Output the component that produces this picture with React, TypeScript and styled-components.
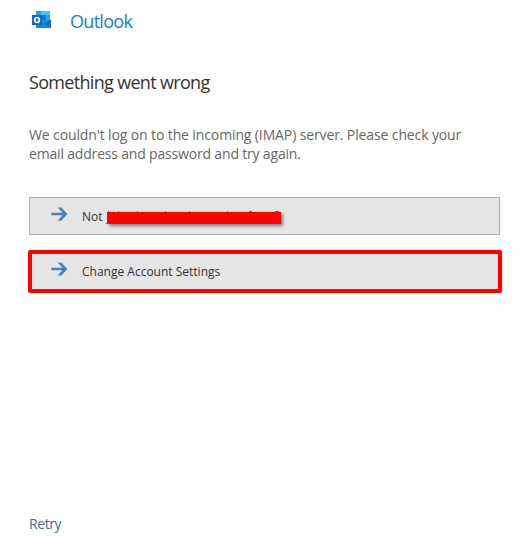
import React from 'react';
import styled, {createGlobalStyle} from 'styled-components';

const theme = {
    colors: {
        brand: '#1a7dcb',
        title: '#333333',
        text: '#666666',
        action: '#333333',
        actionBg: '#e5e5e5',
        actionBorder: '#adadad',
        arrow: '#4a80bd',
        link: '#3b6e9e',
        marker: '#ff0000',
    },
    font: '"Open Sans", "Noto Sans", sans-serif',
}

const OutlookLogo = () => (
    <Logo viewBox="0 0 20 18">
        <path d="M4 0h14v13H4z" fill="#1490df"/>
        <path d="M4 0h5v4H4z" fill="#28a0e5"/>
        <path d="M9 0h9v4H9z" fill="#45c4f5"/>
        <path d="M10 4h4v5h-4z" fill="#0f7fd6"/>
        <path d="M14 4h4v5h-4z" fill="#28a8ea"/>
        <path d="M4 9l8 4 7-4.500V17H4z" fill="#1f9be0"/>
        <path d="M4 9l15 8H4z" fill="#1a8ad6"/>
        <path d="M12 13l7-4.500V17z" fill="#1a6fb5"/>
        <path d="M0 4h10v10H0z" fill="#0a6cc4"/>
        <ellipse cx="5" cy="9" rx="2.400" ry="2.500" fill="none" stroke="#ffffff" strokeWidth="1.700"/>
    </Logo>
)

const ArrowIcon = () => (
    <Arrow viewBox="0 0 17 14">
        <path d="M0.3 5.8h11.2L6.6 0.4h3.8L16.4 7l-6 6.6H6.6l4.9-5.4H0.3z" fill={theme.colors.arrow}/>
    </Arrow>
)

// the bits of lettering that stick out around the bar
const Remnants = () => (
    <RemnantMarks viewBox="0 0 176 15">
        <path d="M1 1.5h1M11 1.5h1M30 1.5h1M58 1.5h1M82 1.5h1M120 1.5h1M142 1.5h3M168 1.5h4M-1 13.5h3"
              stroke="#776666" strokeWidth="1"/>
    </RemnantMarks>
)

const App = () => {
    return (
        <>
            <GlobalStyle/>
            <Page>
                <Header>
                    <OutlookLogo/>
                    <Brand>Outlook</Brand>
                </Header>
                <Title>Something went wrong</Title>
                <Message>
                    <MessageLine $spacing={-0.12}>We couldn't log on to the incoming (IMAP) server. Please check your</MessageLine>
                    <MessageLine $spacing={-0.18}>email address and password and try again.</MessageLine>
                </Message>
                <Actions>
                    <Action>
                        <ArrowIcon/>
                        <Label>Not</Label>
                        <Redaction/>
                        <Remnants/>
                    </Action>
                    <Action $marked>
                        <ArrowIcon/>
                        <Label>Change Account Settings</Label>
                    </Action>
                </Actions>
                <Retry href={'#'}>Retry</Retry>
            </Page>
        </>
    );
};

export default App;

const GlobalStyle = createGlobalStyle`
  * {
    box-sizing: border-box;
    margin: 0;
    padding: 0;
  }

  body {
    background-color: #ffffff;
    font-family: ${theme.font};
    overflow: hidden;
  }
`

const Page = styled.main`
  display: flex;
  flex-direction: column;
  height: 537px;
  padding: 8px 25px 0 29px;
`

const Header = styled.header`
  display: flex;
  align-items: center;
  height: 26px;
`

const Logo = styled.svg`
  width: 20px;
  height: 18px;
  margin: -2px 18px 0 3px;
`

const Brand = styled.span`
  color: ${theme.colors.brand};
  font-size: 18px;
  letter-spacing: -0.7px;
  line-height: 26px;
  white-space: nowrap;
`

const Title = styled.h1`
  margin-top: 35px;
  color: ${theme.colors.title};
  font-size: 18px;
  font-weight: 400;
  letter-spacing: -0.68px;
  line-height: 26px;
  white-space: nowrap;
`

const Message = styled.div`
  margin-top: 30px;
`

const MessageLine = styled.p<{ $spacing: number }>`
  color: ${theme.colors.text};
  font-size: 14px;
  letter-spacing: ${props => props.$spacing}px;
  line-height: 19px;
  white-space: nowrap;
`

const Actions = styled.div`
  display: flex;
  flex-direction: column;
  gap: 17px;
  margin-top: 34px;
`

const Action = styled.button<{ $marked?: boolean }>`
  position: relative;
  display: flex;
  align-items: center;
  width: 471px;
  height: 38px;
  padding-left: 21px;
  border: 1px solid ${theme.colors.actionBorder};
  background-color: ${theme.colors.actionBg};
  font-family: inherit;

  &::after {
    content: '';
    display: ${props => props.$marked ? 'block' : 'none'};
    position: absolute;
    inset: -3px -3px -4px -2px;
    border: 4px solid ${theme.colors.marker};
    border-radius: 2px;
  }
`

const Arrow = styled.svg`
  width: 17px;
  height: 14px;
  margin: -4px 14px 0 0;
`

const Label = styled.span`
  color: ${theme.colors.action};
  font-size: 12px;
  white-space: nowrap;
`

const Redaction = styled.span`
  position: absolute;
  left: 77px;
  top: 14px;
  width: 174px;
  height: 12px;
  background-color: ${theme.colors.marker};
  box-shadow: 2px 2px 3px rgba(0, 0, 0, 0.45);
`

const RemnantMarks = styled.svg`
  position: absolute;
  left: 77px;
  top: 12px;
  width: 176px;
  height: 15px;
  overflow: visible;
`

const Retry = styled.a`
  align-self: flex-start;
  margin-top: auto;
  margin-bottom: 3px;
  color: ${theme.colors.link};
  font-size: 14px;
  letter-spacing: -0.4px;
  line-height: 20px;
  text-decoration: none;
`
